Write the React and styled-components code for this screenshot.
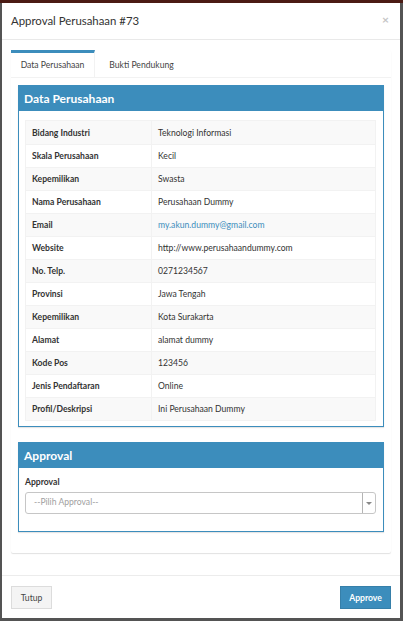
import React from "react";
import styled, { createGlobalStyle } from "styled-components";

const GlobalStyle = createGlobalStyle`
  html, body { margin: 0; padding: 0; background: #545454; }
  * { box-sizing: border-box; }
  body { font-family: Lato, "Noto Sans", sans-serif; color: #333; }
`;

const Backdrop = styled.div`
  width: 403px;
  height: 621px;
  display: flex;
  flex-direction: column;
  background: #545454;
  overflow: hidden;
`;

const TopStrip = styled.div`
  height: 3px;
  flex: none;
  background: #4b1b14;
`;

const ModalRow = styled.div`
  flex: 1;
  display: flex;
  padding: 0 3px 3px 2px;
`;

const Modal = styled.div`
  flex: 1;
  display: flex;
  flex-direction: column;
  background: #fff;
`;

const Header = styled.div`
  height: 37px;
  flex: none;
  display: flex;
  align-items: center;
  justify-content: space-between;
  padding: 0 11px 2px 9px;
  border-bottom: 1px solid #e9e9e9;
`;

const Title = styled.h4`
  margin: 0;
  font-size: 11.4px;
  font-weight: 400;
  color: #333;
`;

const Close = styled.span`
  font-size: 12px;
  font-weight: 700;
  color: #c4c4c4;
  line-height: 1;
`;

const Body = styled.div`
  flex: 1;
  padding: 10px 9px 0 9px;
`;

const TabsBox = styled.div`
  background: #fff;
  box-shadow: 0 1px 1px rgba(0, 0, 0, 0.12);
  border-radius: 2px;
`;

const TabNav = styled.div`
  display: flex;
  height: 28px;
  border-bottom: 1px solid #f2f2f2;
`;

const Tab = styled.div`
  display: flex;
  align-items: center;
  justify-content: center;
  width: ${(p) => p.$w}px;
  font-size: 8.6px;
  color: #444;
  border-top: 3px solid ${(p) => (p.$active ? "#3c8dbc" : "transparent")};
  border-right: 1px solid ${(p) => (p.$active ? "#f2f2f2" : "transparent")};
  padding-bottom: 1px;
`;

const TabContent = styled.div`
  padding: 7px 7px 21px 7px;
`;

const Box = styled.div`
  border: 1px solid #3c8dbc;
  border-top: none;
  box-shadow: 0 1px 1px rgba(0, 0, 0, 0.1);
  margin-bottom: ${(p) => p.$mb || 0}px;
`;

const BoxHeader = styled.div`
  height: 26px;
  background: #3c8dbc;
  display: flex;
  align-items: center;
  padding: 0 6px;
  margin: 0 -1px;
`;

const BoxTitle = styled.h3`
  margin: 0;
  font-size: 12px;
  font-weight: 700;
  color: #fff;
`;

const BoxBody = styled.div`
  padding: ${(p) => p.$pad};
`;

const Table = styled.div`
  border: 1px solid #f2f2f2;
`;

const Row = styled.div`
  display: grid;
  grid-template-columns: 125px 1fr;
  height: 23px;
  background: ${(p) => (p.$odd ? "#f9f9f9" : "#fff")};
  border-top: ${(p) => (p.$first ? "none" : "1px solid #f2f2f2")};
`;

const Cell = styled.div`
  display: flex;
  align-items: center;
  padding: 0 6px;
  font-size: 8.6px;
  font-weight: ${(p) => (p.$label ? 700 : 400)};
  color: ${(p) => (p.$link ? "#3c8dbc" : "#333")};
  border-left: ${(p) => (p.$label ? "none" : "1px solid #f2f2f2")};
  white-space: nowrap;
`;

const Label = styled.div`
  font-size: 8.6px;
  font-weight: 700;
  color: #333;
  margin-bottom: 5px;
`;

const Select = styled.div`
  height: 22px;
  display: flex;
  border: 1px solid #c6c6c6;
  border-radius: 3px;
`;

const SelectText = styled.div`
  flex: 1;
  display: flex;
  align-items: center;
  padding: 0 8px 3px;
  font-size: 8.6px;
  color: #a0a0a0;
`;

const SelectArrow = styled.div`
  width: 13px;
  border-left: 1px solid #b4b4b4;
  display: flex;
  align-items: center;
  justify-content: center;
  &::after {
    content: "";
    border-left: 3px solid transparent;
    border-right: 3px solid transparent;
    border-top: 3px solid #888;
  }
`;

const Footer = styled.div`
  flex: none;
  display: flex;
  justify-content: space-between;
  align-items: center;
  padding: 10px 9px 9px 9px;
  border-top: 1px solid #ececec;
`;

const Button = styled.button`
  height: 23px;
  width: ${(p) => p.$w}px;
  padding: 0;
  font-family: inherit;
  font-size: 8.6px;
  border-radius: 0;
  border: 1px solid ${(p) => (p.$primary ? "#367fa9" : "#dcdcdc")};
  background: ${(p) => (p.$primary ? "#3c8dbc" : "#f4f4f4")};
  color: ${(p) => (p.$primary ? "#fff" : "#444")};
  font-weight: ${(p) => (p.$primary ? 700 : 400)};
`;

const rows = [
  ["Bidang Industri", "Teknologi Informasi"],
  ["Skala Perusahaan", "Kecil"],
  ["Kepemilikan", "Swasta"],
  ["Nama Perusahaan", "Perusahaan Dummy"],
  ["Email", "my.akun.dummy@gmail.com", true],
  ["Website", "http://www.perusahaandummy.com"],
  ["No. Telp.", "0271234567"],
  ["Provinsi", "Jawa Tengah"],
  ["Kepemilikan", "Kota Surakarta"],
  ["Alamat", "alamat dummy"],
  ["Kode Pos", "123456"],
  ["Jenis Pendaftaran", "Online"],
  ["Profil/Deskripsi", "Ini Perusahaan Dummy"],
];

export default function App() {
  return (
    <>
      <GlobalStyle />
      <Backdrop>
        <TopStrip />
        <ModalRow>
          <Modal>
            <Header>
              <Title>Approval Perusahaan #73</Title>
              <Close>×</Close>
            </Header>
            <Body>
              <TabsBox>
                <TabNav>
                  <Tab $active $w={84}>Data Perusahaan</Tab>
                  <Tab $w={94}>Bukti Pendukung</Tab>
                </TabNav>
                <TabContent>
                  <Box $mb={15}>
                    <BoxHeader>
                      <BoxTitle>Data Perusahaan</BoxTitle>
                    </BoxHeader>
                    <BoxBody $pad="9px 7px 5px 6px">
                      <Table>
                        {rows.map(([k, v, link], i) => (
                          <Row key={i} $odd={i % 2 === 0} $first={i === 0}>
                            <Cell $label>{k}</Cell>
                            <Cell $link={link}>{v}</Cell>
                          </Row>
                        ))}
                      </Table>
                    </BoxBody>
                  </Box>
                  <Box>
                    <BoxHeader>
                      <BoxTitle>Approval</BoxTitle>
                    </BoxHeader>
                    <BoxBody $pad="9px 7px 17px 6px">
                      <Label>Approval</Label>
                      <Select>
                        <SelectText>--Pilih Approval--</SelectText>
                        <SelectArrow />
                      </Select>
                    </BoxBody>
                  </Box>
                </TabContent>
              </TabsBox>
            </Body>
            <Footer>
              <Button $w={41}>Tutup</Button>
              <Button $primary $w={51}>Approve</Button>
            </Footer>
          </Modal>
        </ModalRow>
      </Backdrop>
    </>
  );
}
